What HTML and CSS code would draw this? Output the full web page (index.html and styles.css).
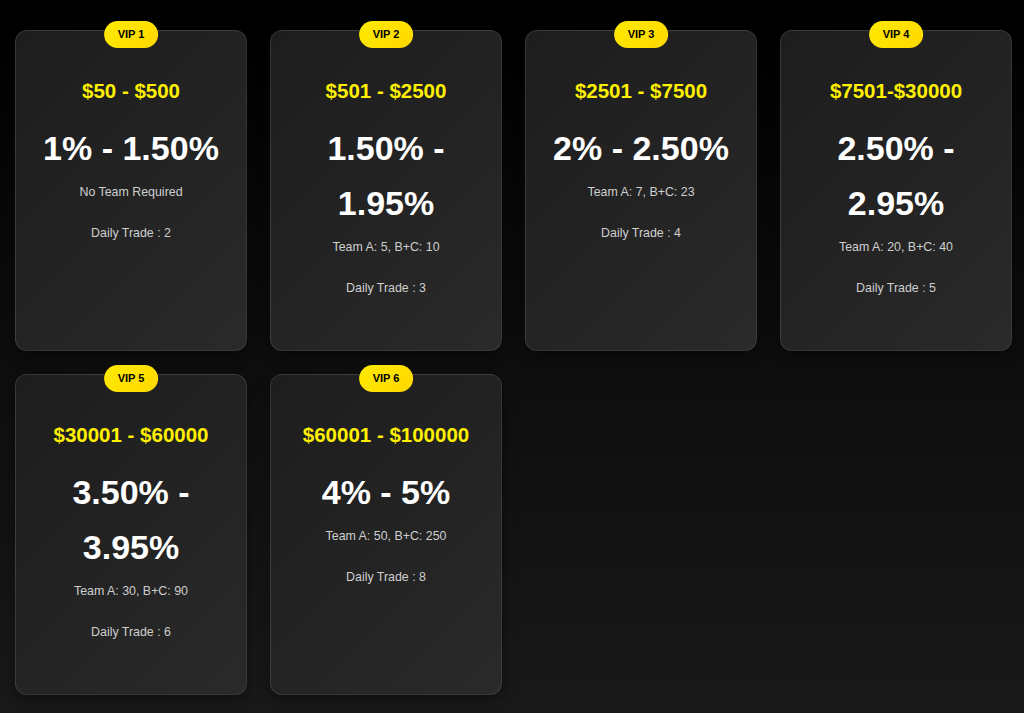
FILE: index.html
```html
<!DOCTYPE html>
<html lang="en">
<head>
<meta charset="utf-8">
<title>VIP Levels</title>
<link rel="stylesheet" href="styles.css">
</head>
<body>
<main class="grid">
  <div class="card">
    <span class="badge">VIP 1</span>
    <h3 class="range">$50 - $500</h3>
    <div class="rate">1% - 1.50%</div>
    <p class="team">No Team Required</p>
    <p class="daily">Daily Trade : 2</p>
  </div>
  <div class="card">
    <span class="badge">VIP 2</span>
    <h3 class="range">$501 - $2500</h3>
    <div class="rate">1.50% - 1.95%</div>
    <p class="team">Team A: 5, B+C: 10</p>
    <p class="daily">Daily Trade : 3</p>
  </div>
  <div class="card">
    <span class="badge">VIP 3</span>
    <h3 class="range">$2501 - $7500</h3>
    <div class="rate">2% - 2.50%</div>
    <p class="team">Team A: 7, B+C: 23</p>
    <p class="daily">Daily Trade : 4</p>
  </div>
  <div class="card">
    <span class="badge">VIP 4</span>
    <h3 class="range">$7501-$30000</h3>
    <div class="rate">2.50% - 2.95%</div>
    <p class="team">Team A: 20, B+C: 40</p>
    <p class="daily">Daily Trade : 5</p>
  </div>
  <div class="card">
    <span class="badge">VIP 5</span>
    <h3 class="range">$30001 - $60000</h3>
    <div class="rate">3.50% - 3.95%</div>
    <p class="team">Team A: 30, B+C: 90</p>
    <p class="daily">Daily Trade : 6</p>
  </div>
  <div class="card">
    <span class="badge">VIP 6</span>
    <h3 class="range">$60001 - $100000</h3>
    <div class="rate">4% - 5%</div>
    <p class="team">Team A: 50, B+C: 250</p>
    <p class="daily">Daily Trade : 8</p>
  </div>
</main>
</body>
</html>
```

FILE: styles.css
```css
html, body {
  margin: 0;
  padding: 0;
}

body {
  min-height: 713px;
  background: linear-gradient(180deg, #000000 0%, #0c0c0c 45%, #191919 100%);
  font-family: "Liberation Sans", Arial, sans-serif;
  color: #fff;
}

.grid {
  display: grid;
  grid-template-columns: repeat(4, 232px);
  gap: 23px;
  padding: 30px 15px 18px;
}

.card {
  position: relative;
  box-sizing: border-box;
  padding: 48px 12px 53px;
  border: 1px solid rgba(255, 255, 255, 0.1);
  border-radius: 12px;
  background: linear-gradient(135deg, #1d1d1d 0%, #232323 50%, #2a2a2a 100%);
  box-shadow: 0 4px 14px rgba(0, 0, 0, 0.4);
  text-align: center;
}

.badge {
  position: absolute;
  top: -10px;
  left: 50%;
  transform: translateX(-50%);
  height: 27px;
  line-height: 27px;
  padding: 0 13.5px;
  border-radius: 14px;
  background: linear-gradient(135deg, #ffea00 0%, #ffd800 100%);
  color: #000;
  font-size: 11px;
  font-weight: 700;
  white-space: nowrap;
}

.range {
  margin: 0;
  font-size: 20.5px;
  line-height: 24px;
  font-weight: 700;
  color: #fff000;
}

.rate {
  margin-top: 17.5px;
  font-size: 34px;
  line-height: 55px;
  font-weight: 700;
  color: #ffffff;
}

.team,
.daily {
  margin: 0;
  font-size: 12.4px;
  line-height: 18px;
  color: #cfcfcf;
}

.team {
  margin-top: 7px;
}

.daily {
  margin-top: 23.5px;
}
```
